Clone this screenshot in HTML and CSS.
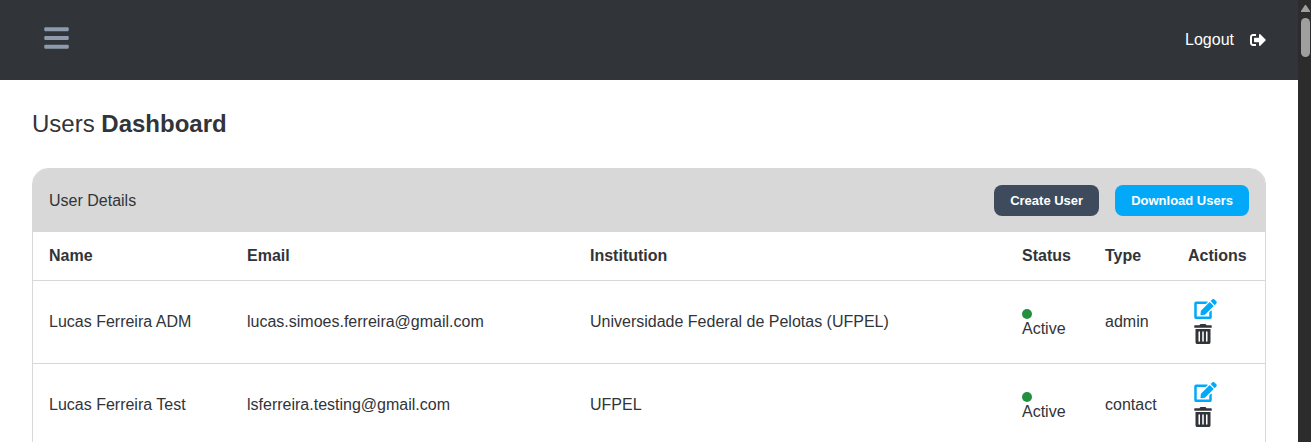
FILE: index.html
```
<!DOCTYPE html>
<html lang="en">
<head>
<meta charset="utf-8">
<meta name="viewport" content="width=device-width, initial-scale=1">
<title>Users Dashboard</title>
<link rel="stylesheet" href="styles.css">
</head>
<body>
<svg class="sprite" aria-hidden="true">
  <symbol id="bars" viewBox="0 0 448 512"><path d="M16 132h416c8.800 0 16-7.200 16-16V76c0-8.800-7.200-16-16-16H16C7.200 60 0 67.200 0 76v40c0 8.800 7.200 16 16 16zm0 160h416c8.800 0 16-7.200 16-16v-40c0-8.800-7.200-16-16-16H16c-8.800 0-16 7.200-16 16v40c0 8.800 7.200 16 16 16zm0 160h416c8.800 0 16-7.200 16-16v-40c0-8.800-7.200-16-16-16H16c-8.800 0-16 7.200-16 16v40c0 8.800 7.200 16 16 16z"/></symbol>
  <symbol id="sign-out" viewBox="0 0 512 512"><path d="M497 273L329 441c-15 15-41 4.500-41-17v-96H152c-13.300 0-24-10.700-24-24v-96c0-13.300 10.700-24 24-24h136V88c0-21.400 25.900-32 41-17l168 168c9.300 9.400 9.300 24.600 0 34zM192 436v-40c0-6.600-5.400-12-12-12H96c-17.700 0-32-14.300-32-32V160c0-17.700 14.300-32 32-32h84c6.600 0 12-5.400 12-12V76c0-6.600-5.400-12-12-12H96c-53 0-96 43-96 96v192c0 53 43 96 96 96h84c6.600 0 12-5.400 12-12z"/></symbol>
  <symbol id="edit" viewBox="0 0 576 512"><path d="M402.600 83.200l90.200 90.200c3.800 3.800 3.800 10 0 13.800L274.400 405.600l-92.800 10.300c-12.400 1.400-22.900-9.100-21.500-21.500l10.300-92.800L388.800 83.200c3.800-3.800 10-3.800 13.800 0zm162-22.900l-48.800-48.800c-15.200-15.200-39.900-15.200-55.200 0l-35.400 35.400c-3.800 3.800-3.800 10 0 13.800l90.200 90.200c3.800 3.800 10 3.800 13.800 0l35.400-35.400c15.200-15.300 15.200-40 0-55.200zM384 346.200V448H64V128h229.800c3.200 0 6.200-1.300 8.500-3.500l40-40c7.600-7.600 2.200-20.500-8.500-20.500H48C21.500 64 0 85.500 0 112v352c0 26.500 21.500 48 48 48h352c26.500 0 48-21.500 48-48V306.200c0-10.700-12.900-16-20.500-8.500l-40 40c-2.200 2.300-3.500 5.300-3.500 8.500z"/></symbol>
  <symbol id="trash" viewBox="0 0 448 512"><path d="M32 464a48 48 0 0 0 48 48h288a48 48 0 0 0 48-48V128H32zm268-256a20 20 0 0 1 40 0v224a20 20 0 0 1-40 0zm-96 0a20 20 0 0 1 40 0v224a20 20 0 0 1-40 0zm-96 0a20 20 0 0 1 40 0v224a20 20 0 0 1-40 0zM432 32H312l-9.400-18.700A24 24 0 0 0 281.100 0H166.800a23.700 23.700 0 0 0-21.400 13.300L136 32H16A16 16 0 0 0 0 48v32a16 16 0 0 0 16 16h416a16 16 0 0 0 16-16V48a16 16 0 0 0-16-16z"/></symbol>
</svg>
<div class="page">
  <header class="topbar">
    <button class="menu-button" type="button" aria-label="Menu"><svg class="icon-menu"><use href="#bars"/></svg></button>
    <a class="logout" href="#">Logout <svg class="icon-logout" aria-hidden="true"><use href="#sign-out"/></svg></a>
  </header>
  <main class="content">
    <h1 class="title">Users <strong>Dashboard</strong></h1>
    <section class="card">
      <div class="card-header">
        <h2 class="card-title">User Details</h2>
        <div class="card-actions">
          <button class="button button-dark" type="button">Create User</button>
          <button class="button button-blue" type="button">Download Users</button>
        </div>
      </div>
      <table class="users">
        <thead>
          <tr><th class="col-name">Name</th><th class="col-email">Email</th><th>Institution</th><th class="col-status">Status</th><th class="col-type">Type</th><th class="col-actions">Actions</th></tr>
        </thead>
        <tbody>
          <tr>
            <td>Lucas Ferreira ADM</td><td>lucas.simoes.ferreira@gmail.com</td><td>Universidade Federal de Pelotas (UFPEL)</td>
            <td><span class="status"><span class="dot"></span>Active</span></td><td>admin</td>
            <td><div class="row-actions"><button class="icon-button edit" type="button" aria-label="Edit user"><svg class="icon-edit"><use href="#edit"/></svg></button><button class="icon-button" type="button" aria-label="Delete user"><svg class="icon-trash"><use href="#trash"/></svg></button></div></td>
          </tr>
          <tr>
            <td>Lucas Ferreira Test</td><td>lsferreira.testing@gmail.com</td><td>UFPEL</td>
            <td><span class="status"><span class="dot"></span>Active</span></td><td>contact</td>
            <td><div class="row-actions"><button class="icon-button edit" type="button" aria-label="Edit user"><svg class="icon-edit"><use href="#edit"/></svg></button><button class="icon-button" type="button" aria-label="Delete user"><svg class="icon-trash"><use href="#trash"/></svg></button></div></td>
          </tr>
        </tbody>
      </table>
    </section>
  </main>
</div>
<div class="scrollbar" aria-hidden="true">
  <svg class="scroll-arrow" viewBox="0 0 9 7"><path d="M4 0h1l4 6v1H0V6z"/></svg>
  <div class="scroll-thumb"></div>
</div>
</body>
</html>
```
FILE: styles.css
```
* {
  box-sizing: border-box;
}

body {
  display: flex;
  height: 100vh;
  margin: 0;
  overflow: hidden;
  background: #fff;
  color: #313439;
  font: 16px/24px "Liberation Sans", Arial, sans-serif;
}

button {
  padding: 0;
  border: 0;
  background: none;
  color: inherit;
  font: inherit;
  cursor: pointer;
}

svg {
  display: block;
  fill: currentColor;
}

.sprite {
  display: none;
}

.page {
  flex: 1;
  min-width: 0;
  overflow: hidden;
}

.topbar {
  display: flex;
  align-items: center;
  justify-content: space-between;
  height: 80px;
  padding: 0 32px 0 44px;
  background: #313439;
}

.menu-button {
  padding-bottom: 4px;
  color: #8d9bad;
}

.icon-menu {
  width: 25px;
  height: 28px;
}

.logout {
  display: flex;
  align-items: center;
  gap: 16px;
  color: #fff;
  text-decoration: none;
}

.icon-logout {
  width: 16px;
  height: 16px;
}

.content {
  padding: 28px 32px;
}

.title {
  margin: 0 0 28px;
  font-size: 24px;
  font-weight: 400;
  line-height: 32px;
}

.card {
  overflow: hidden;
  border: 1px solid #d8d8d8;
  border-radius: 16px 16px 0 0;
}

.card-header {
  display: flex;
  align-items: center;
  justify-content: space-between;
  padding: 16px;
  background: #d8d8d8;
}

.card-title {
  margin: 0;
  font-size: 16px;
  font-weight: 400;
}

.card-actions {
  display: flex;
  gap: 16px;
}

.button {
  padding: 0 16px;
  border-radius: 8px;
  color: #fff;
  font-size: 13px;
  font-weight: 700;
  line-height: 31px;
}

.button-dark {
  background: #3d4b5c;
}

.button-blue {
  background: #03a9f9;
}

.users {
  width: 100%;
  table-layout: fixed;
  border-collapse: separate;
  border-spacing: 0;
}

.users th,
.users td {
  padding: 16px;
  border-bottom: 1px solid #d8d8d8;
  text-align: left;
}

.users th {
  padding: 12px 16px;
}

.col-name {
  width: 198px;
}

.col-email {
  width: 343px;
}

.col-status,
.col-type {
  width: 83px;
}

.col-actions {
  width: 93px;
}

.status {
  display: flex;
  flex-direction: column;
  padding-top: 4px;
  line-height: 20px;
}

.dot {
  width: 10px;
  height: 10px;
  border-radius: 50%;
  background: #22903f;
}

.row-actions {
  display: flex;
  flex-direction: column;
  align-items: flex-start;
  padding-left: 6px;
}

.icon-button {
  display: flex;
  align-items: flex-start;
  height: 25px;
  padding-top: 2px;
}

.edit {
  color: #03a9f9;
}

.icon-edit {
  width: 23px;
  height: 20px;
}

.icon-trash {
  width: 18px;
  height: 20px;
}

.scrollbar {
  display: flex;
  flex-direction: column;
  align-items: center;
  gap: 6px;
  width: 13px;
  padding: 5px 0 0 1px;
  background: #2c2c2c;
}

.scroll-arrow {
  width: 9px;
  height: 7px;
  color: #9f9f9f;
}

.scroll-thumb {
  width: 9px;
  height: 39px;
  border-radius: 5px;
  background: #9f9f9f;
}
```
